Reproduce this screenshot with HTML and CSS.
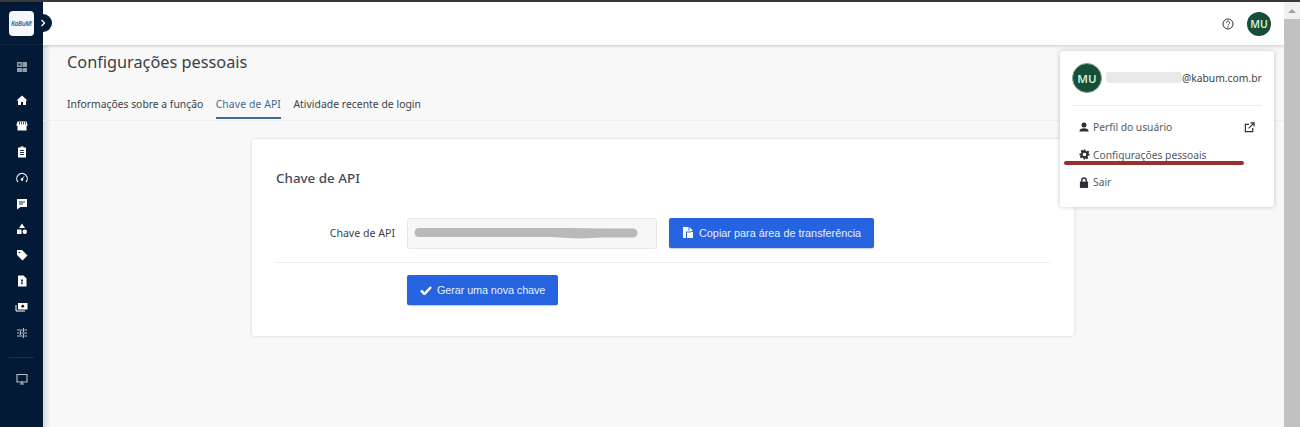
FILE: index.html
```html
<!DOCTYPE html>
<html lang="pt-BR">
<head>
<meta charset="utf-8">
<title>Configurações pessoais</title>
<link rel="stylesheet" href="styles.css">
</head>
<body>
<div class="topline"></div>
<div class="app">
  <aside class="sidebar">
    <div class="brand">
      <div class="logo"><span class="logo-text">KaBuM<span class="logo-bang">!</span></span></div>
      <button class="toggle" aria-label="Expandir">
        <svg width="8" height="10" viewBox="0 0 8 10"><path d="M2.500 2l3 3-3 3" fill="none" stroke="#fff" stroke-width="1.300"/></svg>
      </button>
    </div>
    <nav class="nav">
      <svg class="ico dim first" viewBox="0 0 24 24"><path fill-rule="evenodd" d="M3 2h8a1 1 0 0 1 1 1v8a1 1 0 0 1-1 1H3a1 1 0 0 1-1-1V3a1 1 0 0 1 1-1zM5 5v4h4V5zM14 2h7a1 1 0 0 1 1 1v8a1 1 0 0 1-1 1h-7a1 1 0 0 1-1-1V3a1 1 0 0 1 1-1zM3 14h8a1 1 0 0 1 1 1v7H3a1 1 0 0 1-1-1v-6a1 1 0 0 1 1-1zM14 14h7a1 1 0 0 1 1 1v6a1 1 0 0 1-1 1h-8v-7a1 1 0 0 1 1-1z"/></svg>
      <svg class="ico" viewBox="0 0 24 24"><path d="M12 3L1 13h3v9h6v-6h4v6h6v-9h3z"/></svg>
      <svg class="ico" viewBox="0 0 24 24"><path d="M3 3h18l2 6v2a3 3 0 0 1-2 1v9H3v-9a3 3 0 0 1-2-1V9z"/><path d="M7 4v5M11 4v5M15 4v5M19 4v5" stroke="#031a36" stroke-width="1.400"/></svg>
      <svg class="ico" viewBox="0 0 24 24"><path d="M9 1h6v2h4a1 1 0 0 1 1 1v18a1 1 0 0 1-1 1H5a1 1 0 0 1-1-1V4a1 1 0 0 1 1-1h4z"/><path d="M8 9h8M8 13h8M8 17h8" stroke="#031a36" stroke-width="1.800"/></svg>
      <svg class="ico" viewBox="0 0 24 24"><path d="M4 20a10.500 10.500 0 1 1 16 0" fill="none" stroke="#fff" stroke-width="2.200"/><path d="M12 14l4-5" stroke="#fff" stroke-width="2"/><circle cx="12" cy="15" r="2.600"/></svg>
      <svg class="ico" viewBox="0 0 24 24"><path d="M2 2h20v16H9l-7 5z"/><path d="M6 8h12M6 12h8" stroke="#031a36" stroke-width="1.800"/></svg>
      <svg class="ico" viewBox="0 0 24 24"><path d="M12 1l6 9H6zM2 13h9v9H2z"/><circle cx="17.500" cy="17.500" r="4.500"/></svg>
      <svg class="ico" viewBox="0 0 24 24"><path d="M2 2h10l11 11-10 10L2 12z"/><circle cx="7" cy="7" r="1.600" fill="#031a36"/></svg>
      <svg class="ico" viewBox="0 0 24 24"><path d="M5 1h10l6 6v16H4V2z"/><path d="M12 8v11M10 11h4M10 16h4" stroke="#031a36" stroke-width="1.700"/></svg>
      <svg class="ico wide" viewBox="0 0 24 24"><path d="M5 4h19v13H5z"/><circle cx="14.500" cy="10.500" r="2.800" fill="#031a36"/><path d="M1 8v12h18" fill="none" stroke="#fff" stroke-width="2"/></svg>
      <svg class="ico dim" viewBox="0 0 24 24"><path d="M2 6h11M17 6h5M2 12h5M11 12h11M2 18h11M17 18h5" stroke="#fff" stroke-width="2.200"/><path d="M15 2v8M9 8v8M15 14v8" stroke="#fff" stroke-width="2.200"/></svg>
      <div class="nav-sep"></div>
      <svg class="ico dim" viewBox="0 0 24 24"><path d="M2 3h20v15H2z" fill="none" stroke="#fff" stroke-width="2.200"/><path d="M12 16v6M8 22h8" stroke="#fff" stroke-width="2.200"/></svg>
    </nav>
  </aside>

  <div class="main">
    <header class="topbar">
      <svg class="help" viewBox="0 0 24 24" width="12" height="12"><circle cx="12" cy="12" r="10" fill="none" stroke="#333" stroke-width="2"/><path d="M8.800 9.500a3.200 3.200 0 1 1 4.800 2.800c-1 .6-1.600 1.100-1.600 2.500" fill="none" stroke="#333" stroke-width="2"/><circle cx="12" cy="18" r="1.300" fill="#333"/></svg>
      <div class="avatar">MU</div>
    </header>

    <div class="page-head">
      <h1 class="title">Configurações pessoais</h1>
      <div class="tabs">
        <a class="tab">Informações sobre a função</a>
        <a class="tab active">Chave de API</a>
        <a class="tab">Atividade recente de login</a>
      </div>
    </div>

    <section class="card">
      <h2 class="card-title">Chave de API</h2>
      <div class="row key-row">
        <label class="label">Chave de API</label>
        <div class="key-field">
          <svg class="redact" width="224" height="12" viewBox="0 0 224 12"><path d="M5 1h150l35 .5h29a4.500 4.500 0 0 1 0 9h-29l-25 1-28-1.500H5a4.500 4.500 0 0 1 0-9z" fill="#b9b9b9"/></svg>
        </div>
        <button class="btn">
          <svg width="12" height="13" viewBox="0 0 24 24"><path d="M2 1h11v7h6v2H8v13H2z" fill="#fff"/><path d="M10 12h7v-1h5v12H10zM15 1l7 8h-7z" fill="#fff"/></svg>
          Copiar para área de transferência
        </button>
      </div>
      <div class="row action-row">
        <button class="btn btn-tight">
          <svg width="12" height="10" viewBox="0 0 24 20"><path d="M2 11l7 7L22 4" fill="none" stroke="#fff" stroke-width="5"/></svg>
          Gerar uma nova chave
        </button>
      </div>
    </section>

    <div class="menu">
      <div class="menu-user">
        <div class="avatar avatar-ring">MU</div>
        <div class="menu-mail"><span class="mail-redact"></span>@kabum.com.br</div>
      </div>
      <ul class="menu-list">
        <li class="menu-item">
          <span class="menu-ico"><svg width="10" height="10" viewBox="0 0 24 24" fill="#2b2f36"><circle cx="12" cy="7" r="6"/><path d="M1 23c0-6 4-8 11-8s11 2 11 8z"/></svg></span>
          <span class="grow">Perfil do usuário</span>
          <svg width="11" height="11" viewBox="0 0 24 24" fill="none" stroke="#2b2f36" stroke-width="2.600"><path d="M11 5H3v16h16v-8M10 14L22 2M14 2h8v8"/></svg>
        </li>
        <li class="menu-item">
          <span class="menu-ico"><svg width="11" height="11" viewBox="0 0 24 24" fill="#2b2f36"><path fill-rule="evenodd" d="M10 1h4l.7 3.300 2 .9 2.900-1.800 2.800 2.800-1.800 2.900.9 2L23 10v4l-3.500.7-.9 2 1.800 2.900-2.800 2.800-2.900-1.800-2 .9L14 23h-4l-.7-3.500-2-.9-2.900 1.800-2.800-2.800 1.800-2.900-.9-2L1 14v-4l3.500-.8.9-2-1.800-2.900 2.800-2.800 2.900 1.800 2-.9zM12 8a4 4 0 1 0 0 8 4 4 0 0 0 0-8z"/></svg></span>
          <span class="grow">Configurações pessoais</span>
        </li>
        <li class="menu-item">
          <span class="menu-ico"><svg width="10" height="11" viewBox="0 0 22 24" fill="#2b2f36"><path d="M2 10h18v14H2z"/><path d="M6 11V7a5 5 0 0 1 10 0v4" fill="none" stroke="#2b2f36" stroke-width="3"/></svg></span>
          <span class="grow">Sair</span>
        </li>
      </ul>
      <div class="underline"></div>
    </div>
  </div>

  <div class="scrollbar"><span class="arrow"></span><span class="thumb"></span></div>
</div>
</body>
</html>
```
FILE: styles.css
```css
* { box-sizing: border-box; }
html, body { margin: 0; height: 100%; overflow: hidden; }
body { font-family: "Noto Sans", "Open Sans", sans-serif; color: #33383f; background: #f8f8f8; display: flex; flex-direction: column; }
.topline { height: 2px; background: #3a3a3a; flex: none; }
.app { flex: 1; display: flex; min-height: 0; }

.sidebar { width: 43px; flex: none; background: #031a36; position: relative; z-index: 3; }
.brand { height: 43px; display: flex; align-items: center; justify-content: center; position: relative; border-bottom: 1px solid #0e2542; }
.logo { width: 25px; height: 25px; margin-top: 1px; border-radius: 4px; background: #f4f8fb; display: flex; align-items: center; justify-content: center; }
.logo-text { font-size: 6.500px; font-style: italic; font-weight: 600; color: #2a68ad; letter-spacing: -.3px; }
.logo-bang { color: #d9703a; }
.toggle { position: absolute; right: -9px; top: 12px; width: 18px; height: 18px; padding: 0; border: 0; border-radius: 50%; background: #031a36; display: flex; align-items: center; justify-content: center; }
.nav { display: flex; flex-direction: column; align-items: center; }
.ico { width: 12px; height: 12px; fill: #fff; margin-top: 13.900px; flex: none; }
.ico.first { margin-top: 16px; margin-bottom: 7.100px; fill: #c9ced6; }
.ico.wide { width: 13px; }
.ico.dim { opacity: .72; }
.nav-sep { width: 25px; height: 1px; background: #1b324f; margin: 18px 0 1.100px; }

.main { flex: 1; min-width: 0; position: relative; }
.main::before { content: ""; position: absolute; left: 0; top: 0; bottom: 0; width: 8px; background: linear-gradient(90deg, #d6dae2, #f8f8f8); }
.topbar { height: 43px; background: #fff; display: flex; align-items: center; justify-content: flex-end; gap: 13px; padding-right: 13px; box-shadow: 0 1px 3px rgba(0,0,0,.2); position: relative; }
.avatar { width: 24px; height: 24px; border-radius: 50%; background: #164e37; color: #d5ecdf; font-size: 10.500px; font-weight: 600; display: flex; align-items: center; justify-content: center; flex: none; }
.avatar-ring { width: 30px; height: 30px; font-size: 11.500px; border: 1px solid #7da691; }

.page-head { position: relative; border-bottom: 1px solid #eceef0; height: 76px; padding: 7px 0 0 24px; }
.title { margin: 0; font-size: 16.300px; font-weight: 400; line-height: 20px; color: #3a3f46; }
.tabs { display: flex; gap: 12.500px; margin-top: 19px; }
.tab { font-size: 10.350px; line-height: 16px; padding: 5px 0 5px; color: #3d4249; border-bottom: 2px solid transparent; }
.tab.active { color: #41699c; border-bottom-color: #3d6a9e; letter-spacing: .12px; }
.tab:last-child { letter-spacing: .04px; }

.card { position: relative; margin: 18px 0 0 209px; width: 822px; height: 197px; background: #fff; border-radius: 3px; box-shadow: 0 0 3px rgba(0,0,0,.16); padding: 30px 24px 0; }
.card-title { margin: 0 0 30.500px; font-size: 13.400px; line-height: 18px; font-weight: 500; color: #464a51; }
.row { display: flex; align-items: center; }
.key-row { height: 45px; padding-bottom: 13px; border-bottom: 1px solid #eceef0; box-sizing: border-box; align-items: flex-start; }
.label { width: 119px; text-align: right; font-size: 10.600px; line-height: 30px; color: #3d4249; }
.key-field { width: 250px; height: 31px; margin: 0 12px; background: #f7f7f7; border: 1px solid #e8e8e8; border-radius: 2px; display: flex; align-items: center; padding-left: 6px; flex: none; }
.redact { flex: none; }
.btn { height: 30px; padding: 0 13px; background: #2563e0; color: #e8effc; border: 0; border-radius: 2px; font-family: "Liberation Sans", Arial, sans-serif; font-size: 10.850px; display: inline-flex; align-items: center; gap: 5px; box-shadow: 0 1px 1px rgba(0,0,0,.2); white-space: nowrap; }
.btn-tight { letter-spacing: -.1px; }
.action-row { padding: 12px 0 0 131px; }

.menu { position: absolute; top: 49px; left: 1017px; width: 214px; height: 156px; background: #fff; border-radius: 3px; box-shadow: 0 0 5px rgba(0,0,0,.22); padding: 12px 12px 0; z-index: 2; }
.menu-user { display: flex; align-items: center; gap: 4px; padding-bottom: 12px; border-bottom: 1px solid #eceef0; }
.menu-mail { display: flex; align-items: center; font-size: 10.300px; color: #3d4249; white-space: nowrap; margin-top: -1px; }
.mail-redact { width: 76px; height: 11px; background: #e9e9e9; border-radius: 3px; display: block; }
.menu-list { list-style: none; margin: 7.500px 0 0; padding: 0 7px 0 6px; }
.menu-item { display: flex; align-items: center; gap: 3px; height: 27.500px; font-size: 10.250px; color: #55595f; }
.menu-item svg { flex: none; }
.menu-ico { width: 12px; display: flex; justify-content: center; flex: none; }
.grow { flex: 1; }
.underline { position: absolute; left: 4px; top: 110px; width: 180px; height: 4px; border-radius: 2px; background: #9a2f2f; }

.scrollbar { width: 16px; flex: none; background: #f1f1f1; position: relative; z-index: 4; display: flex; flex-direction: column; }
.arrow { height: 17px; flex: none; display: flex; align-items: center; justify-content: center; }
.arrow::before { content: ""; border: 4px solid transparent; border-top: 0; border-bottom: 4px solid #a3a3a3; }
.thumb { flex: 1; background: #c1c1c1; }
```
